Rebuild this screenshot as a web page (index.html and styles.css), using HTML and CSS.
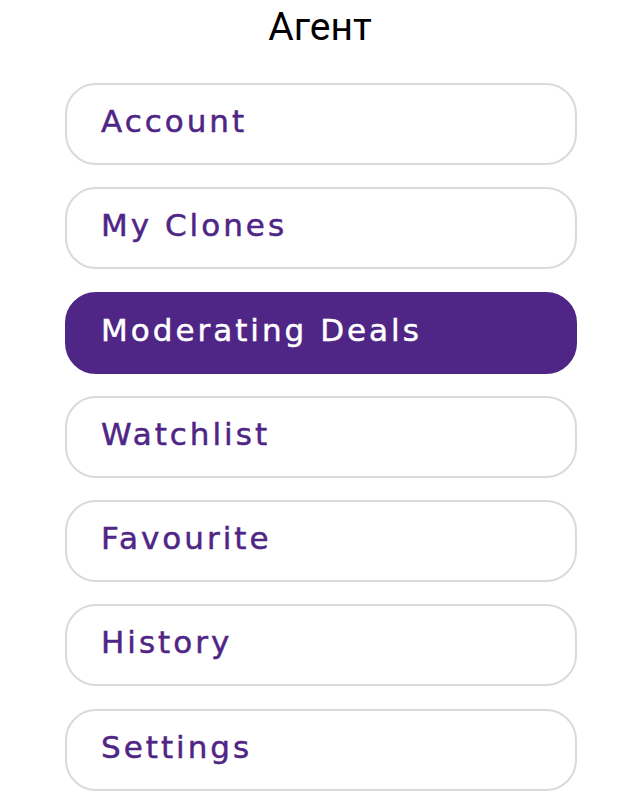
FILE: index.html
```html
<!DOCTYPE html>
<html lang="ru">
<head>
<meta charset="utf-8">
<title>Агент</title>
<link rel="stylesheet" href="styles.css">
</head>
<body>
<h1 class="title">Агент</h1>
<nav class="menu">
  <a class="item">Account</a>
  <a class="item">My Clones</a>
  <a class="item active">Moderating Deals</a>
  <a class="item">Watchlist</a>
  <a class="item">Favourite</a>
  <a class="item">History</a>
  <a class="item">Settings</a>
</nav>
</body>
</html>
```
FILE: styles.css
```css
html, body {
  margin: 0;
  padding: 0;
  background: #ffffff;
}
.title {
  margin: 0;
  height: 83px;
  padding-top: 3px;
  box-sizing: border-box;
  text-align: center;
  font-family: Roboto, "Liberation Sans", sans-serif;
  font-weight: 400;
  font-size: 39px;
  line-height: 48px;
  color: #000000;
}
.menu {
  display: flex;
  flex-direction: column;
  gap: 22.3px;
  width: 512px;
  margin: 0 0 0 65px;
}
.item {
  display: flex;
  align-items: center;
  box-sizing: border-box;
  height: 82px;
  padding: 0 0 6px 34px;
  border: 2px solid #dadada;
  border-radius: 31px;
  font-family: "DejaVu Sans", sans-serif;
  font-size: 31px;
  letter-spacing: 3px;
  -webkit-text-stroke: 0.5px currentColor;
  color: #4f2585;
}
.item.active {
  background: #4f2585;
  border-color: #4f2585;
  color: #ffffff;
}
```
